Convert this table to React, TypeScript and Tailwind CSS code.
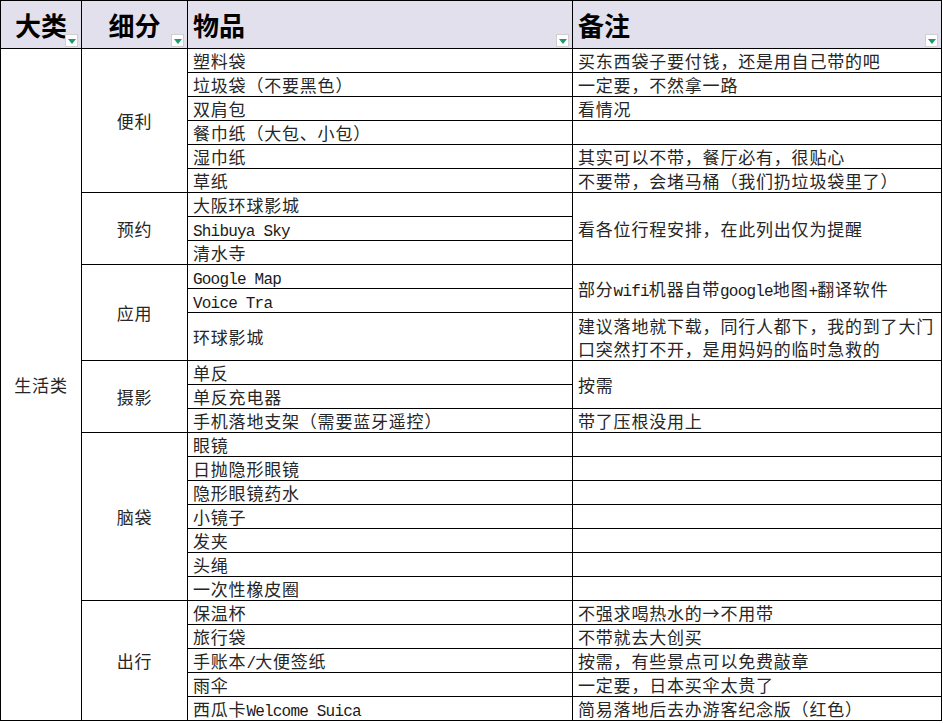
import React from 'react'

type Row = {
  item: string
  note?: string
  span?: number
  tall?: boolean
  covered?: boolean
}

type Group = { name: string; rows: Row[] }

const groups: Group[] = [
  {
    name: '便利',
    rows: [
      { item: '塑料袋', note: '买东西袋子要付钱，还是用自己带的吧' },
      { item: '垃圾袋（不要黑色）', note: '一定要，不然拿一路' },
      { item: '双肩包', note: '看情况' },
      { item: '餐巾纸（大包、小包）', note: '' },
      { item: '湿巾纸', note: '其实可以不带，餐厅必有，很贴心' },
      { item: '草纸', note: '不要带，会堵马桶（我们扔垃圾袋里了）' },
    ],
  },
  {
    name: '预约',
    rows: [
      { item: '大阪环球影城', note: '看各位行程安排，在此列出仅为提醒', span: 3 },
      { item: 'Shibuya Sky', covered: true },
      { item: '清水寺', covered: true },
    ],
  },
  {
    name: '应用',
    rows: [
      { item: 'Google Map', note: '部分wifi机器自带google地图+翻译软件', span: 2 },
      { item: 'Voice Tra', covered: true },
      {
        item: '环球影城',
        note: '建议落地就下载，同行人都下，我的到了大门口突然打不开，是用妈妈的临时急救的',
        tall: true,
      },
    ],
  },
  {
    name: '摄影',
    rows: [
      { item: '单反', note: '按需', span: 2 },
      { item: '单反充电器', covered: true },
      { item: '手机落地支架（需要蓝牙遥控）', note: '带了压根没用上' },
    ],
  },
  {
    name: '脑袋',
    rows: [
      { item: '眼镜', note: '' },
      { item: '日抛隐形眼镜', note: '' },
      { item: '隐形眼镜药水', note: '' },
      { item: '小镜子', note: '' },
      { item: '发夹', note: '' },
      { item: '头绳', note: '' },
      { item: '一次性橡皮圈', note: '' },
    ],
  },
  {
    name: '出行',
    rows: [
      { item: '保温杯', note: '不强求喝热水的→不用带' },
      { item: '旅行袋', note: '不带就去大创买' },
      { item: '手账本/大便签纸', note: '按需，有些景点可以免费敲章' },
      { item: '雨伞', note: '一定要，日本买伞太贵了' },
      { item: '西瓜卡Welcome Suica', note: '简易落地后去办游客纪念版（红色）' },
    ],
  },
]

const totalRows = groups.reduce((n, g) => n + g.rows.length, 0)

// latin runs are half width in the sheet font, so render them mono and squeezed
function Txt({ text }: { text: string }) {
  const parts = text.split(/([\x20-\x7e]+)/).filter(Boolean)
  return (
    <>
      {parts.map((p, i) =>
        /^[\x20-\x7e]+$/.test(p) ? (
          <span
            key={i}
            className="font-['Liberation_Mono',monospace] text-[16px] leading-none tracking-[-0.8px] whitespace-pre text-[#1a1a1a]"
          >
            {p}
          </span>
        ) : (
          <span key={i}>{p}</span>
        ),
      )}
    </>
  )
}

function Filter() {
  return (
    <span className="absolute right-[3px] bottom-[1px] flex h-[13px] w-[13px] items-center justify-center border border-[#cfcfcf] bg-white">
      <span className="mt-[2px] h-0 w-0 border-x-[4px] border-t-[5px] border-x-transparent border-t-[#1f9a6e]" />
    </span>
  )
}

const cell = 'border border-black p-0'
const body = 'text-[17px] leading-[23px] tracking-[0.8px] text-[#262626]'

export default function App() {
  let first = true
  return (
    <div className="min-h-screen bg-white font-['Noto_Sans_CJK_SC',sans-serif]">
      <table className="w-[941px] table-fixed border-collapse">
        <colgroup>
          <col className="w-[81px]" />
          <col className="w-[106px]" />
          <col className="w-[385px]" />
          <col className="w-[369px]" />
        </colgroup>
        <thead>
          <tr className="h-[48px] bg-[#e3e0ee] text-[26px] text-black">
            <th className={`${cell} relative text-center font-semibold`}>
              大类
              <Filter />
            </th>
            <th className={`${cell} relative text-center font-semibold`}>
              细分
              <Filter />
            </th>
            <th className={`${cell} relative pl-[5px] text-left font-semibold`}>
              物品
              <Filter />
            </th>
            <th className={`${cell} relative pl-[5px] text-left font-semibold`}>
              备注
              <Filter />
            </th>
          </tr>
        </thead>
        <tbody className={body}>
          {groups.map((g) =>
            g.rows.map((r, i) => {
              const showCat = first
              first = false
              return (
                <tr key={g.name + i} className={r.tall ? 'h-[48px]' : 'h-[24px]'}>
                  {showCat && (
                    <td rowSpan={totalRows} className={`${cell} text-center`}>
                      生活类
                    </td>
                  )}
                  {i === 0 && (
                    <td rowSpan={g.rows.length} className={`${cell} text-center`}>
                      {g.name}
                    </td>
                  )}
                  <td className={`${cell} pl-[5px] whitespace-nowrap`}>
                    <Txt text={r.item} />
                  </td>
                  {!r.covered && (
                    <td rowSpan={r.span ?? 1} className={`${cell} pr-[2px] pl-[5px]`}>
                      <Txt text={r.note ?? ''} />
                    </td>
                  )}
                </tr>
              )
            }),
          )}
        </tbody>
      </table>
    </div>
  )
}
